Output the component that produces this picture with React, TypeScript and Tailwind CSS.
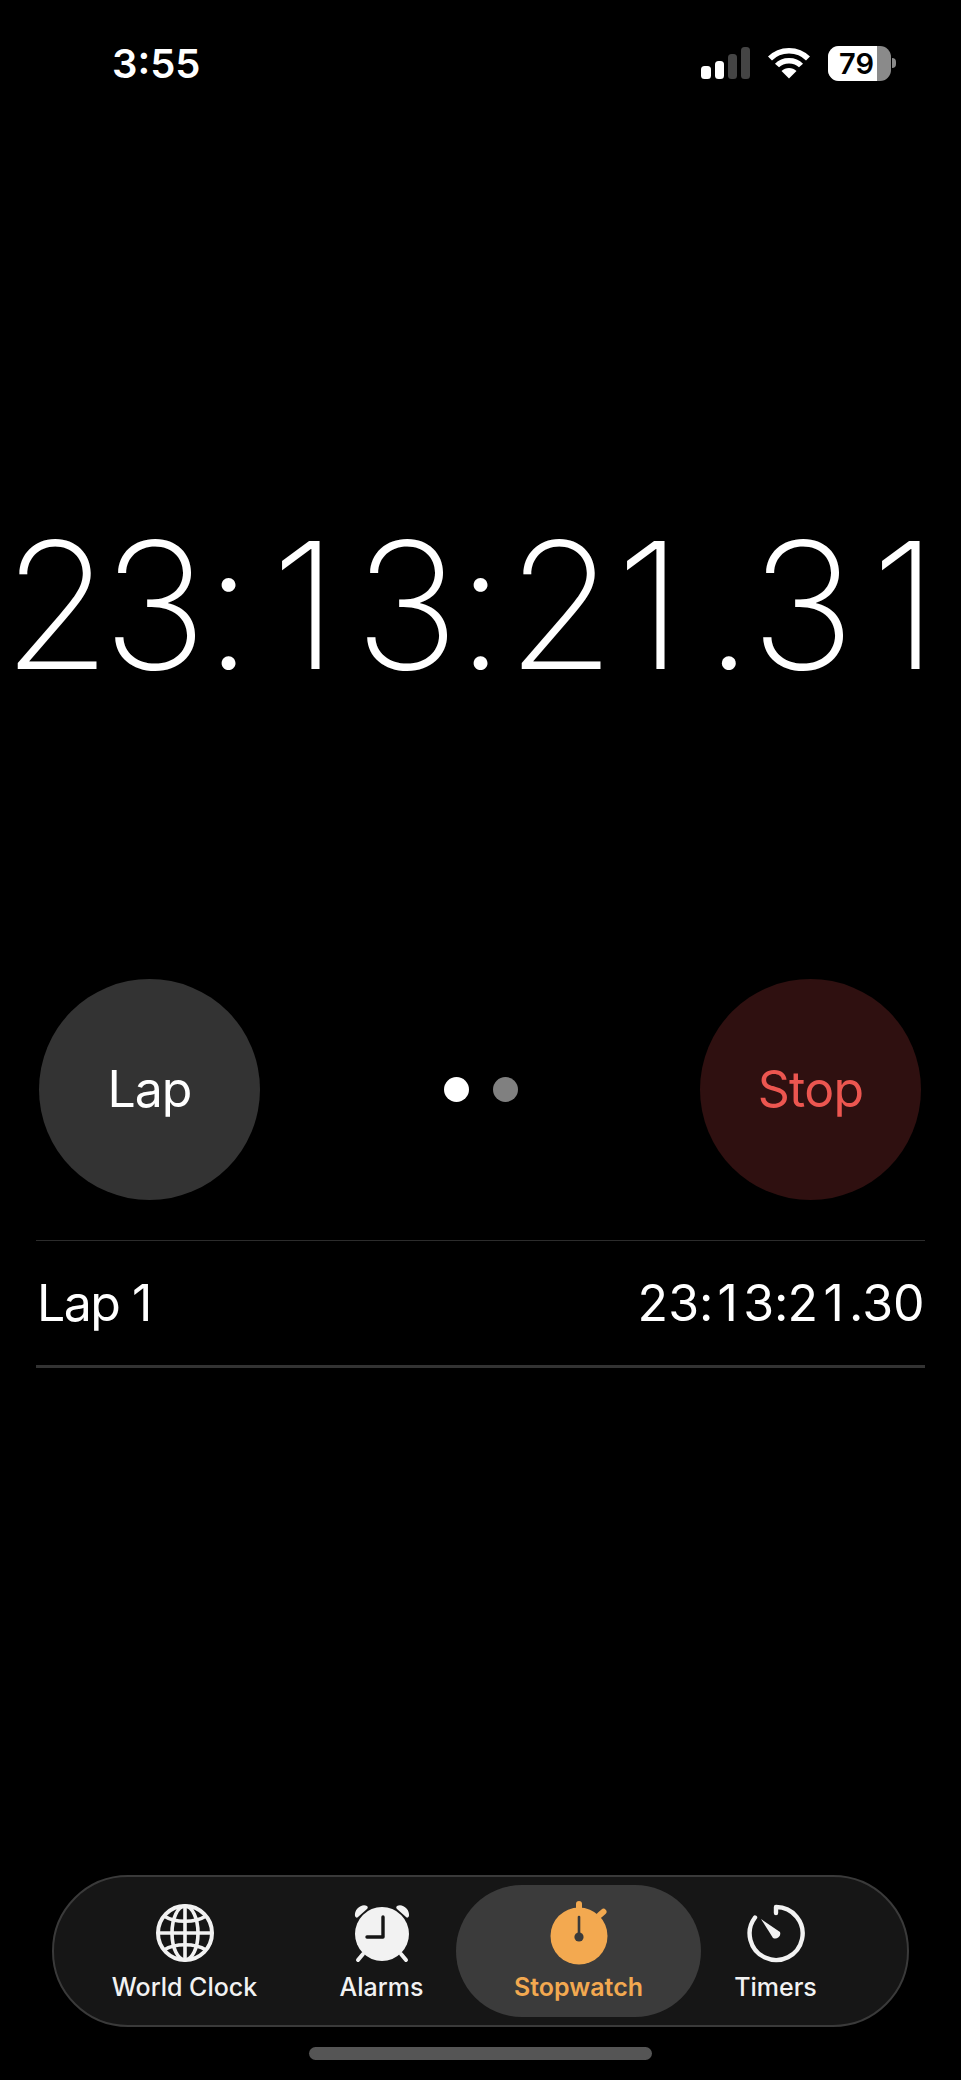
const font = "font-['Inter','Noto_Sans',sans-serif]";

const StatusIcons = () => (
  <div className="flex items-center">
    <svg width="50" height="32" viewBox="0 0 50 32" className="mr-[16px]">
      <rect x="0" y="19" width="10" height="13" rx="3.5" fill="#fff" />
      <rect x="14" y="14" width="9" height="18" rx="3.5" fill="#fff" />
      <rect x="27" y="7" width="9" height="25" rx="3.5" fill="#444" />
      <rect x="40" y="0" width="9" height="32" rx="3.5" fill="#444" />
    </svg>
    <svg width="44" height="32" viewBox="0 0 44 32" className="mr-[17px]" fill="none" stroke="#fff" strokeWidth="5.5">
      <path d="M3 11.5C13 1 31 1 41 11.5" />
      <path d="M10 18.5C16 12 28 12 34 18.5" />
      <path d="M22 31.5L14.5 24C18.5 20 25.5 20 29.5 24Z" fill="#fff" stroke="none" />
    </svg>
    <div className="relative flex h-[35px] w-[63px] overflow-hidden rounded-[11px] bg-[#8a8a8a]">
      <div className="flex h-full w-[49px] items-center justify-end bg-white pr-[3px] text-[29px] font-semibold leading-none text-black">79</div>
    </div>
    <div className="ml-[1px] h-[10px] w-[4px] rounded-r-full bg-[#8a8a8a]" />
  </div>
);

const GlobeIcon = () => (
  <svg width="64" height="64" viewBox="0 0 64 64" fill="none" stroke="#f2f2f2" strokeWidth="3.6">
    <circle cx="32" cy="32" r="27" strokeWidth="4" />
    <ellipse cx="32" cy="32" rx="13" ry="27" />
    <path d="M32 5V59" />
    <path d="M5 32H59" />
    <path d="M11 15C22 22 42 22 53 15" />
    <path d="M11 49C22 42 42 42 53 49" />
  </svg>
);

const AlarmIcon = () => (
  <svg width="64" height="64" viewBox="0 0 64 64">
    <circle cx="32" cy="33" r="27" fill="#f2f2f2" />
    <path d="M5 15C4 8 12 2 17 5C18 6 18 7 17 8L8 16C7 17 6 17 5 15Z" fill="#f2f2f2" />
    <path d="M59 15C60 8 52 2 47 5C46 6 46 7 47 8L56 16C57 17 58 17 59 15Z" fill="#f2f2f2" />
    <path d="M13 53L8 59M51 53L56 59" stroke="#f2f2f2" strokeWidth="4" strokeLinecap="round" />
    <path d="M33 16V36H17" fill="none" stroke="#161616" strokeWidth="3.4" strokeLinecap="round" strokeLinejoin="round" />
  </svg>
);

const StopwatchIcon = () => (
  <svg width="64" height="64" viewBox="0 0 64 64">
    <circle cx="32" cy="35" r="28.5" fill="#f3a950" />
    <rect x="29" y="0" width="6" height="10" rx="3" fill="#f3a950" />
    <rect x="52" y="7" width="6" height="11" rx="3" fill="#f3a950" transform="rotate(48 55 12)" />
    <path d="M32 16V34" stroke="#3a3a3a" strokeWidth="2.6" strokeLinecap="round" />
    <circle cx="32" cy="36" r="4.6" fill="#3a3a3a" />
  </svg>
);

const TimerIcon = () => (
  <svg width="64" height="64" viewBox="0 0 64 64" fill="none">
    <path d="M32 12V6A26.5 26.5 0 1 1 11 16.5" stroke="#f2f2f2" strokeWidth="4.4" strokeLinecap="round" strokeLinejoin="round" />
    <path d="M17 18L36 31A5 5 0 0 1 29 37Z" fill="#f2f2f2" />
  </svg>
);

const tabs = [
  { label: "World Clock", icon: <GlobeIcon /> },
  { label: "Alarms", icon: <AlarmIcon /> },
  { label: "Stopwatch", icon: <StopwatchIcon />, active: true },
  { label: "Timers", icon: <TimerIcon /> },
];

// big digits sit in cells, widths read off the screenshot
const bigTime = [
  ["2", "w-[100px]"],
  ["3", "w-[100px]"],
  [":", "w-[52px]"],
  ["1", "w-[100px]"],
  ["3", "w-[100px]"],
  [":", "w-[52px]"],
  ["2", "w-[88px]"],
  ["1", "w-[110px]"],
  [".", "w-[46px]"],
  ["3", "w-[100px]"],
  ["1", "w-[108px]"],
];

const lapTime = "23:13:21.30";

export default function App() {
  return (
    <div className={`${font} flex h-[2080px] w-[961px] flex-col bg-black text-white`}>
      {/* status bar */}
      <div className="mt-[40px] flex h-[46px] items-center justify-between pl-[112px] pr-[65px]">
        <span className="mt-[2px] text-[40px] font-semibold leading-none">3:55</span>
        <StatusIcons />
      </div>

      {/* big time */}
      <div className="mt-[411px] flex h-[216px] items-center justify-center whitespace-nowrap text-[176px] font-extralight leading-none">
        {bigTime.map(([c, w], i) => (
          <span key={i} className={`text-center ${w}`}>{c}</span>
        ))}
      </div>

      {/* buttons */}
      <div className="mt-[266px] flex items-center justify-between pl-[39px] pr-[40px]">
        <div className="flex h-[221px] w-[221px] items-center justify-center rounded-full bg-[#333333] text-[50px] tracking-[-0.02em]">Lap</div>
        <div className="mr-[-1px] flex items-center gap-[24px]">
          <div className="h-[25px] w-[25px] rounded-full bg-white" />
          <div className="h-[25px] w-[25px] rounded-full bg-[#808080]" />
        </div>
        <div className="flex h-[221px] w-[221px] items-center justify-center rounded-full bg-[#2f1010] text-[50px] tracking-[-0.015em] text-[#ec5650]">Stop</div>
      </div>

      {/* lap list */}
      <div className="mx-[36px] mt-[40px] border-t border-[#2c2c2c]">
        <div className="flex h-[127px] items-center justify-between border-b-[3px] border-[#333333] px-[1px] text-[50px] tracking-[-0.01em]">
          <span className="tracking-[-0.03em]">Lap 1</span>
          <span className="inline-flex">
            {lapTime.split("").map((c, i) => (
              <span key={i} className={`text-center ${c === ":" || c === "." ? "w-[13px]" : "w-[31px]"}`}>
                {c}
              </span>
            ))}
          </span>
        </div>
      </div>

      {/* tab bar */}
      <div className="mt-auto pb-[20px]">
        <div className="mx-[52px] flex h-[152px] items-center rounded-full border-[2px] border-[#3a3a3a] bg-[#161616] px-[32px]">
          {tabs.map((t) => (
            <div
              key={t.label}
              className={
                t.active
                  ? "-mx-[24px] flex h-[132px] w-[245px] flex-col items-center rounded-full bg-[#3b3b3b] pt-[16px] font-semibold text-[#f3a950]"
                  : "flex h-[132px] w-[197px] flex-col items-center pt-[16px] font-medium text-[#f2f2f2]"
              }
            >
              {t.icon}
              <span className="mt-[7px] whitespace-nowrap text-[25px] leading-[30px]">{t.label}</span>
            </div>
          ))}
        </div>
        <div className="mx-auto mt-[20px] h-[13px] w-[343px] rounded-full bg-[#555555]" />
      </div>
    </div>
  );
}
